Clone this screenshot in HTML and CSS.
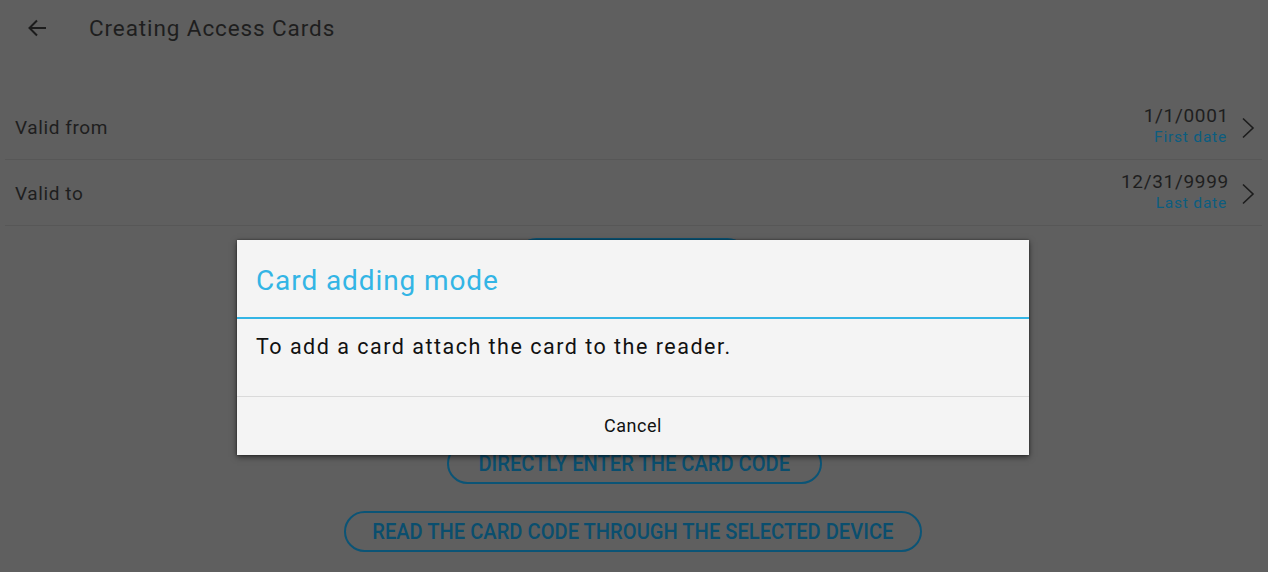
FILE: index.html
```html
<!DOCTYPE html>
<html>
<head>
<meta charset="utf-8">
<link rel="stylesheet" href="styles.css">
</head>
<body>
<div class="page">
  <header class="appbar">
    <span class="back">
      <svg width="20" height="20" viewBox="0 0 20 20"><path d="M19 10H2.5M10 2.5L2.5 10L10 17.5" fill="none" stroke="#1c1c1c" stroke-width="2"/></svg>
    </span>
    <h1 class="title">Creating Access Cards</h1>
  </header>
  <div class="list">
    <div class="row">
      <span class="label">Valid from</span>
      <div class="value">
        <span class="main">1/1/0001</span>
        <span class="sub">First date</span>
      </div>
      <svg class="chev" width="14" height="22" viewBox="0 0 14 22"><path d="M2 1.5L12 11L2 20.5" fill="none" stroke="#1c1c1c" stroke-width="1.6"/></svg>
    </div>
    <div class="row">
      <span class="label">Valid to</span>
      <div class="value">
        <span class="main">12/31/9999</span>
        <span class="sub">Last date</span>
      </div>
      <svg class="chev" width="14" height="22" viewBox="0 0 14 22"><path d="M2 1.5L12 11L2 20.5" fill="none" stroke="#1c1c1c" stroke-width="1.6"/></svg>
    </div>
  </div>
  <div class="actions">
    <button class="pill hidden-pill"><span>ADD CARD</span></button>
    <div class="spacer"></div>
    <button class="pill p-direct"><span>DIRECTLY ENTER THE CARD CODE</span></button>
    <button class="pill p-read"><span>READ THE CARD CODE THROUGH THE SELECTED DEVICE</span></button>
  </div>

  <div class="dialog">
    <div class="d-title">Card adding mode</div>
    <div class="d-msg">To add a card attach the card to the reader.</div>
    <div class="d-btn">Cancel</div>
  </div>
</div>
</body>
</html>
```
FILE: styles.css
```css
* { box-sizing: border-box; }
html, body { margin: 0; padding: 0; }
body {
  width: 1268px;
  height: 572px;
  overflow: hidden;
  background: #5f5f5f;
  font-family: Roboto, "Noto Sans", sans-serif;
  color: #1e1e1e;
}
.page { position: relative; width: 1268px; height: 572px; }
.appbar {
  height: 56px;
  display: flex;
  align-items: center;
}
.back {
  width: 20px;
  height: 20px;
  margin-left: 27px;
  display: flex;
}
.title {
  margin: 0 0 0 42px;
  font-size: 22.5px;
  letter-spacing: 0.9px;
  font-weight: 400;
  color: #1e1e1e;
}
.list {
  margin: 38px 6px 0 5px;
}
.row {
  height: 66px;
  display: flex;
  align-items: center;
  padding: 0 7px 0 10px;
  border-bottom: 1px solid #575757;
}
.label {
  flex: 1;
  font-size: 19px;
  letter-spacing: 0.6px;
  color: #1e1e1e;
  padding-top: 2px;
}
.value {
  display: flex;
  flex-direction: column;
  align-items: flex-end;
  margin-right: 12px;
}
.main {
  font-size: 19px;
  letter-spacing: 0.7px;
  line-height: 22px;
  color: #1e1e1e;
}
.sub {
  font-size: 15.5px;
  letter-spacing: 0.8px;
  line-height: 21px;
  color: #0b5d80;
  margin-right: 2px;
}
.chev { margin-top: 2px; }

.actions {
  display: flex;
  flex-direction: column;
  align-items: center;
}
.pill {
  border: 2px solid #0b5476;
  border-radius: 21px;
  background: transparent;
  height: 41px;
  font-family: Roboto, sans-serif;
  font-size: 22px;
  font-weight: 500;
  color: #0a4e6e;
  display: flex;
  align-items: center;
  justify-content: center;
  padding: 0;
}
.pill span { display: inline-block; transform: scaleX(0.915); white-space: nowrap; }
.hidden-pill { margin-top: 12px; width: 232px; margin-left: -4px; }
.spacer { height: 164px; }
.p-direct { width: 375px; margin-left: 1px; }
.p-read { width: 578px; margin-top: 27px; margin-left: -2px; }

.dialog {
  position: absolute;
  left: 237px;
  top: 240px;
  width: 792px;
  height: 215px;
  background: #f4f4f4;
  box-shadow: 0 2px 6px rgba(0,0,0,0.55), 0 0 2px rgba(0,0,0,0.4);
  display: flex;
  flex-direction: column;
}
.d-title {
  height: 79px;
  border-bottom: 2px solid #33b5e5;
  color: #33b5e5;
  font-size: 28px;
  letter-spacing: 0.9px;
  padding: 24px 0 0 19px;
}
.d-msg {
  height: 78px;
  border-bottom: 1px solid #dadada;
  font-size: 21.5px;
  letter-spacing: 1.5px;
  color: #111;
  padding: 15px 0 0 19px;
}
.d-btn {
  flex: 1;
  display: flex;
  align-items: center;
  justify-content: center;
  font-size: 18px;
  letter-spacing: 0.5px;
  color: #111;
  padding-bottom: 2px;
}
```
